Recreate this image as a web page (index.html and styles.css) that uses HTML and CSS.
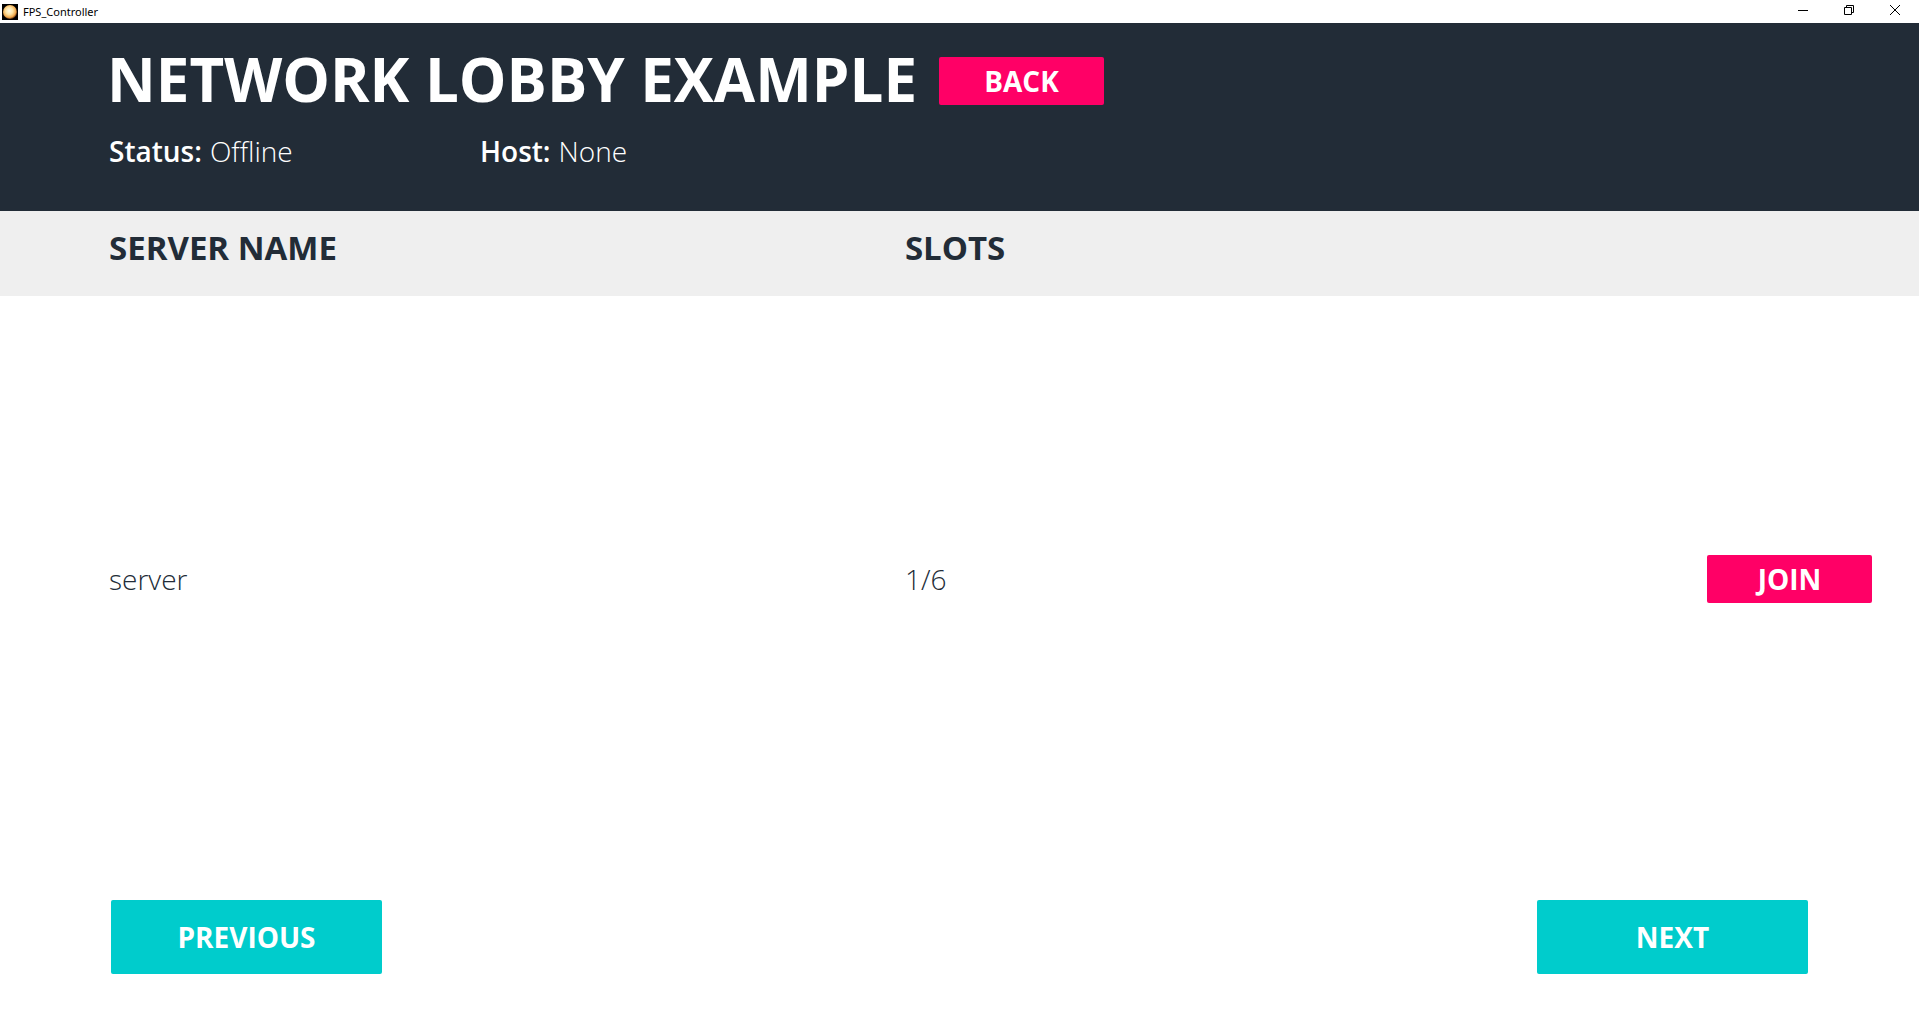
FILE: index.html
```html
<!DOCTYPE html>
<html lang="en">
<head>
<meta charset="utf-8">
<title>FPS_Controller</title>
<link rel="stylesheet" href="styles.css">
</head>
<body>
<div class="window">
  <div class="titlebar">
    <svg class="app-icon" width="16" height="16" viewBox="0 0 16 16" aria-hidden="true">
      <defs>
        <radialGradient id="sun" cx="0.45" cy="0.42" r="0.58">
          <stop offset="0" stop-color="#fffbe6"/>
          <stop offset="0.45" stop-color="#ffe2a0"/>
          <stop offset="0.8" stop-color="#f0a84c"/>
          <stop offset="1" stop-color="#6b3410"/>
        </radialGradient>
      </defs>
      <rect width="16" height="16" fill="#000"/>
      <circle cx="8" cy="8" r="7" fill="url(#sun)"/>
    </svg>
    <span class="app-name">FPS_Controller</span>
    <div class="window-controls">
      <button class="window-button" type="button" aria-label="Minimize">
        <svg width="10" height="10" viewBox="0 0 10 10"><path d="M0 5.5H10" stroke="#000" fill="none"/></svg>
      </button>
      <button class="window-button" type="button" aria-label="Restore">
        <svg width="10" height="10" viewBox="0 0 10 10"><path d="M0.5 2.5H7.5V9.5H0.5ZM2.5 2.5V0.5H9.5V7.5H7.5" stroke="#000" fill="none"/></svg>
      </button>
      <button class="window-button" type="button" aria-label="Close">
        <svg width="10" height="10" viewBox="0 0 10 10"><path d="M0 0L10 10M10 0L0 10" stroke="#000" fill="none"/></svg>
      </button>
    </div>
  </div>

  <header class="lobby-header">
    <div class="heading">
      <h1 class="title">NETWORK LOBBY EXAMPLE</h1>
      <button class="button button-pink back" type="button">BACK</button>
    </div>
    <dl class="connection">
      <div class="fact"><dt>Status:</dt><dd>Offline</dd></div>
      <div class="fact"><dt>Host:</dt><dd>None</dd></div>
    </dl>
  </header>

  <main class="server-list">
    <table class="servers">
      <thead>
        <tr>
          <th class="col-name" scope="col">SERVER NAME</th>
          <th class="col-slots" scope="col">SLOTS</th>
          <td class="col-action"></td>
        </tr>
      </thead>
      <tbody>
        <tr>
          <td class="col-name">server</td>
          <td class="col-slots">1/6</td>
          <td class="col-action"><button class="button button-pink" type="button">JOIN</button></td>
        </tr>
      </tbody>
    </table>
  </main>

  <nav class="pager" aria-label="Server pages">
    <button class="button button-teal" type="button">PREVIOUS</button>
    <button class="button button-teal" type="button">NEXT</button>
  </nav>
</div>
</body>
</html>
```
FILE: styles.css
```css
* {
  box-sizing: border-box;
}

body {
  margin: 0;
  background: #fff;
  color: #222c37;
  font-family: "Open Sans", "Noto Sans", sans-serif;
  font-size: 28px;
  line-height: 40px;
}

.window {
  display: flex;
  flex-direction: column;
  min-height: 100vh;
}

/* Title bar */
.titlebar {
  display: flex;
  align-items: center;
  gap: 5px;
  height: 23px;
  padding: 0 1px 0 2px;
  background: #fff;
  color: #000;
  font-family: "Noto Sans", "Open Sans", sans-serif;
  font-size: 11px;
  line-height: 16px;
}

.window-controls {
  display: flex;
  align-self: stretch;
  margin-left: auto;
}

.window-button {
  display: flex;
  align-items: center;
  justify-content: center;
  width: 46px;
  padding: 0 0 3px;
  border: 0;
  background: none;
}

/* Header */
.lobby-header {
  padding: 20px 48px 40px 107px;
  background: #222c37;
  color: #fff;
}

.heading {
  display: flex;
  align-items: flex-start;
  gap: 22px;
}

.title {
  margin: 0;
  font-size: 60px;
  font-weight: 700;
  line-height: 72px;
}

.back {
  margin-top: 14px;
}

.connection {
  display: flex;
  margin: 16px 0 0 2px;
}

.fact {
  display: flex;
  gap: 8px;
  min-width: 371px;
}

.fact dt {
  font-weight: 600;
}

.fact dd {
  margin: 0;
  font-weight: 300;
}

/* Buttons */
.button {
  border: 0;
  border-radius: 2px;
  color: #fff;
  font-family: inherit;
  font-size: 28px;
  font-weight: 700;
  line-height: 40px;
}

.button-pink {
  width: 165px;
  height: 48px;
  padding: 0;
  background: #ff0066;
}

.button-teal {
  width: 271px;
  height: 74px;
  background: #00cccc;
}

/* Server table */
.server-list {
  display: grid;
  flex: 1;
}

.servers {
  width: 100%;
  height: 100%;
  border-collapse: collapse;
  table-layout: fixed;
  text-align: left;
}

.servers thead tr {
  height: 85px;
  background: #efefef;
}

.servers th {
  padding: 13px 0 24px;
  font-size: 33px;
  font-weight: 700;
  line-height: 48px;
}

.servers tbody td {
  padding: 0;
  font-weight: 300;
  vertical-align: middle;
}

.servers .col-name {
  width: 47%;
  padding-left: 109px;
}

.servers .col-slots {
  padding-left: 3px;
}

.servers .col-action {
  padding-right: 47px;
  text-align: right;
}

.servers .button {
  display: block;
  margin-left: auto;
}

/* Pager */
.pager {
  display: flex;
  justify-content: space-between;
  padding: 39px 111px 58px;
}
```
